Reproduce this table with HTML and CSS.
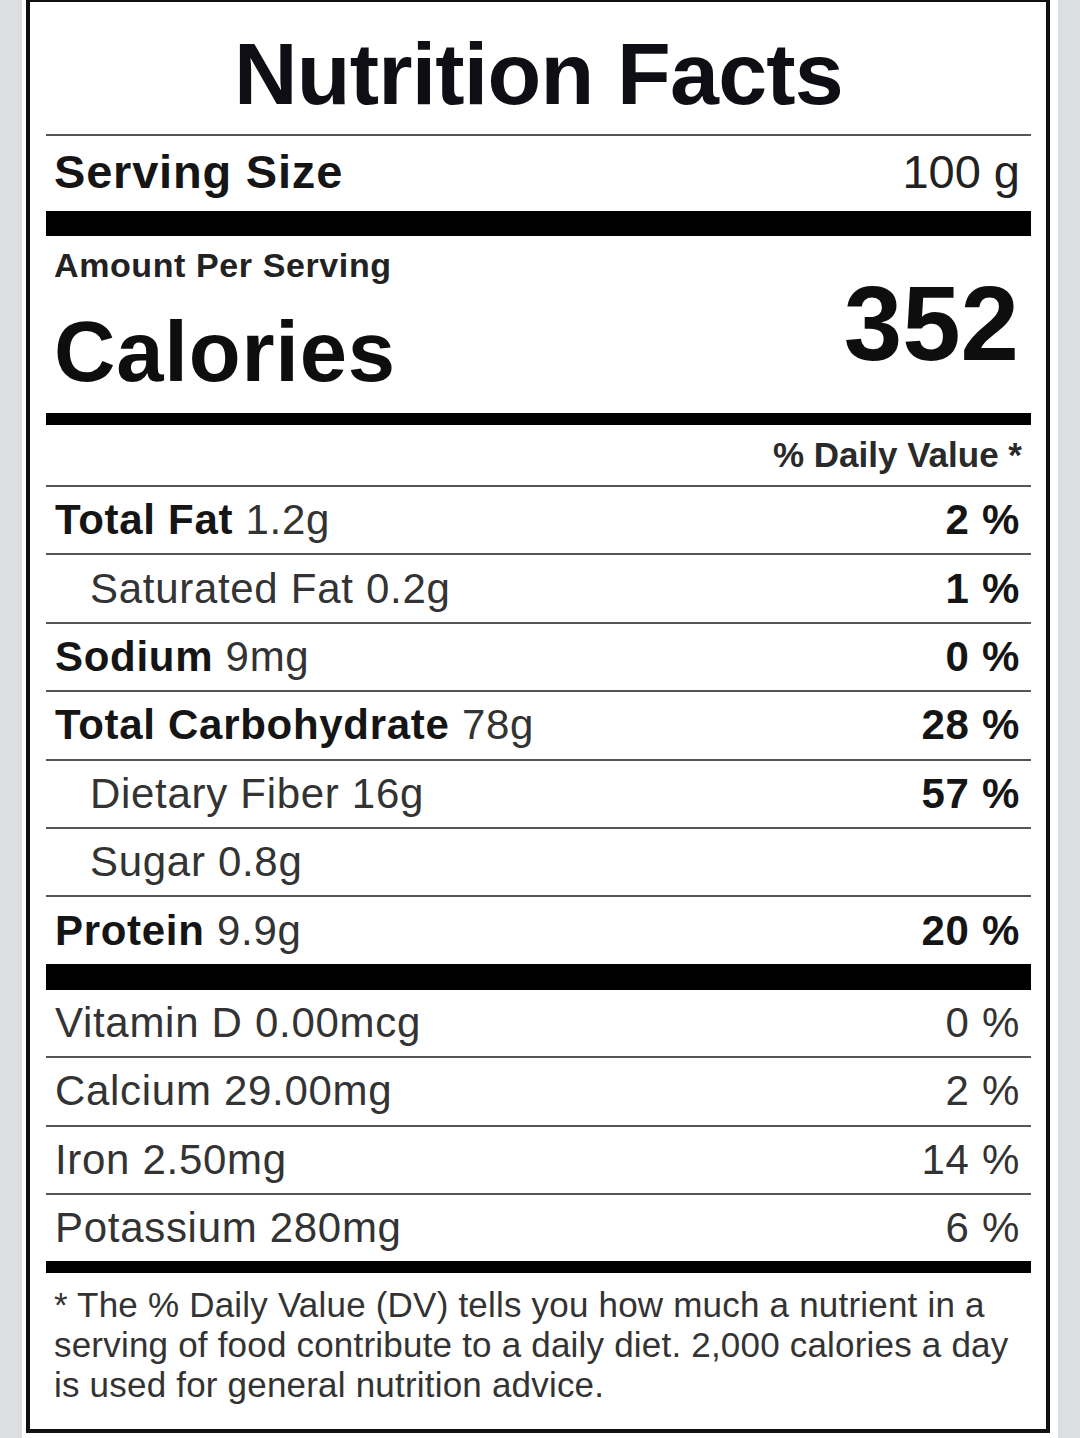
FILE: index.html
```html
<!DOCTYPE html>
<html lang="en">
<head>
<meta charset="utf-8">
<title>Nutrition Facts</title>
<link rel="stylesheet" href="styles.css">
</head>
<body>
<div class="page">
  <div class="label">
    <h1 class="title">Nutrition Facts</h1>
    <div class="serving">
      <span class="b">Serving Size</span>
      <span class="serving-val">100 g</span>
    </div>
    <div class="bar bar-lg"></div>
    <div class="calories">
      <div class="cal-left">
        <div class="amount">Amount Per Serving</div>
        <div class="cal-label">Calories</div>
      </div>
      <div class="cal-value">352</div>
    </div>
    <div class="bar bar-md"></div>
    <div class="dv-head">% Daily Value *</div>

    <div class="rows">
      <div class="row"><span><b>Total Fat</b> 1.2g</span><b>2 %</b></div>
      <div class="row sub"><span>Saturated Fat 0.2g</span><b>1 %</b></div>
      <div class="row"><span><b>Sodium</b> 9mg</span><b>0 %</b></div>
      <div class="row"><span><b>Total Carbohydrate</b> 78g</span><b>28 %</b></div>
      <div class="row sub"><span>Dietary Fiber 16g</span><b>57 %</b></div>
      <div class="row sub"><span>Sugar 0.8g</span></div>
      <div class="row"><span><b>Protein</b> 9.9g</span><b>20 %</b></div>
    </div>
    <div class="bar bar-lg2"></div>
    <div class="rows">
      <div class="row"><span>Vitamin D 0.00mcg</span><span>0 %</span></div>
      <div class="row"><span>Calcium 29.00mg</span><span>2 %</span></div>
      <div class="row"><span>Iron 2.50mg</span><span>14 %</span></div>
      <div class="row"><span>Potassium 280mg</span><span>6 %</span></div>
    </div>
    <div class="bar bar-md"></div>
    <p class="footnote">* The % Daily Value (DV) tells you how much a nutrient in a serving of food contribute to a daily diet. 2,000 calories a day is used for general nutrition advice.</p>
  </div>
</div>
</body>
</html>
```

FILE: styles.css
```css
* {
  box-sizing: border-box;
}

html, body {
  margin: 0;
  padding: 0;
}

body {
  background: #dcdfdf;
  font-family: "Liberation Sans", Arial, Helvetica, sans-serif;
  color: #1a1a1a;
}

.page {
  margin: 0 22px;
  background: #ffffff;
  padding: 0 8px 5px 4px;
}

.label {
  border: 4px solid #111;
  border-top-width: 2px;
  padding: 0 15px 0 16px;
}

.title {
  margin: 0;
  padding: 28px 0 16px;
  font-size: 88px;
  line-height: 88px;
  font-weight: 700;
  text-align: center;
  letter-spacing: -0.8px;
  color: #0e0e14;
}

.serving {
  border-top: 2px solid #555;
  display: flex;
  justify-content: space-between;
  align-items: baseline;
  padding: 9px 11px 12px 8px;
  font-size: 47px;
  line-height: 54px;
}

.serving .b {
  font-weight: 700;
  letter-spacing: 0.8px;
  color: #151515;
}

.serving-val {
  color: #222;
}

.bar {
  background: #000;
}

.bar-lg {
  height: 25px;
}

.bar-lg2 {
  height: 26px;
}

.bar-md {
  height: 12px;
}

.calories {
  display: flex;
  justify-content: space-between;
  align-items: flex-start;
  padding: 10px 12px 19px 8px;
}

.amount {
  font-size: 34px;
  line-height: 39px;
  font-weight: 700;
  letter-spacing: 0.6px;
  color: #222;
}

.cal-label {
  margin-top: 24px;
  font-size: 85px;
  line-height: 85px;
  font-weight: 700;
  letter-spacing: 0.8px;
  color: #0e0e0e;
}

.cal-value {
  margin-top: 25px;
  font-size: 105px;
  line-height: 105px;
  font-weight: 700;
  color: #0e0e0e;
}

.dv-head {
  padding: 10px 9px 10px 0;
  font-size: 35px;
  line-height: 40px;
  font-weight: 700;
  text-align: right;
  color: #2a2a2a;
  border-bottom: 2px solid #555;
}

.row {
  display: flex;
  justify-content: space-between;
  align-items: center;
  height: 66.4px;
  padding: 0 11px 0 9px;
  font-size: 42px;
  line-height: 48px;
  letter-spacing: 0.7px;
  color: #333;
}

.row + .row {
  border-top: 2px solid #555;
  height: 68.4px;
}

.row b {
  font-weight: 700;
  color: #151515;
}

.row.sub {
  padding-left: 44px;
}

.footnote {
  margin: 0;
  padding: 12px 20px 24px 8px;
  font-size: 35px;
  line-height: 40px;
  letter-spacing: 0.2px;
  color: #333;
}
```
